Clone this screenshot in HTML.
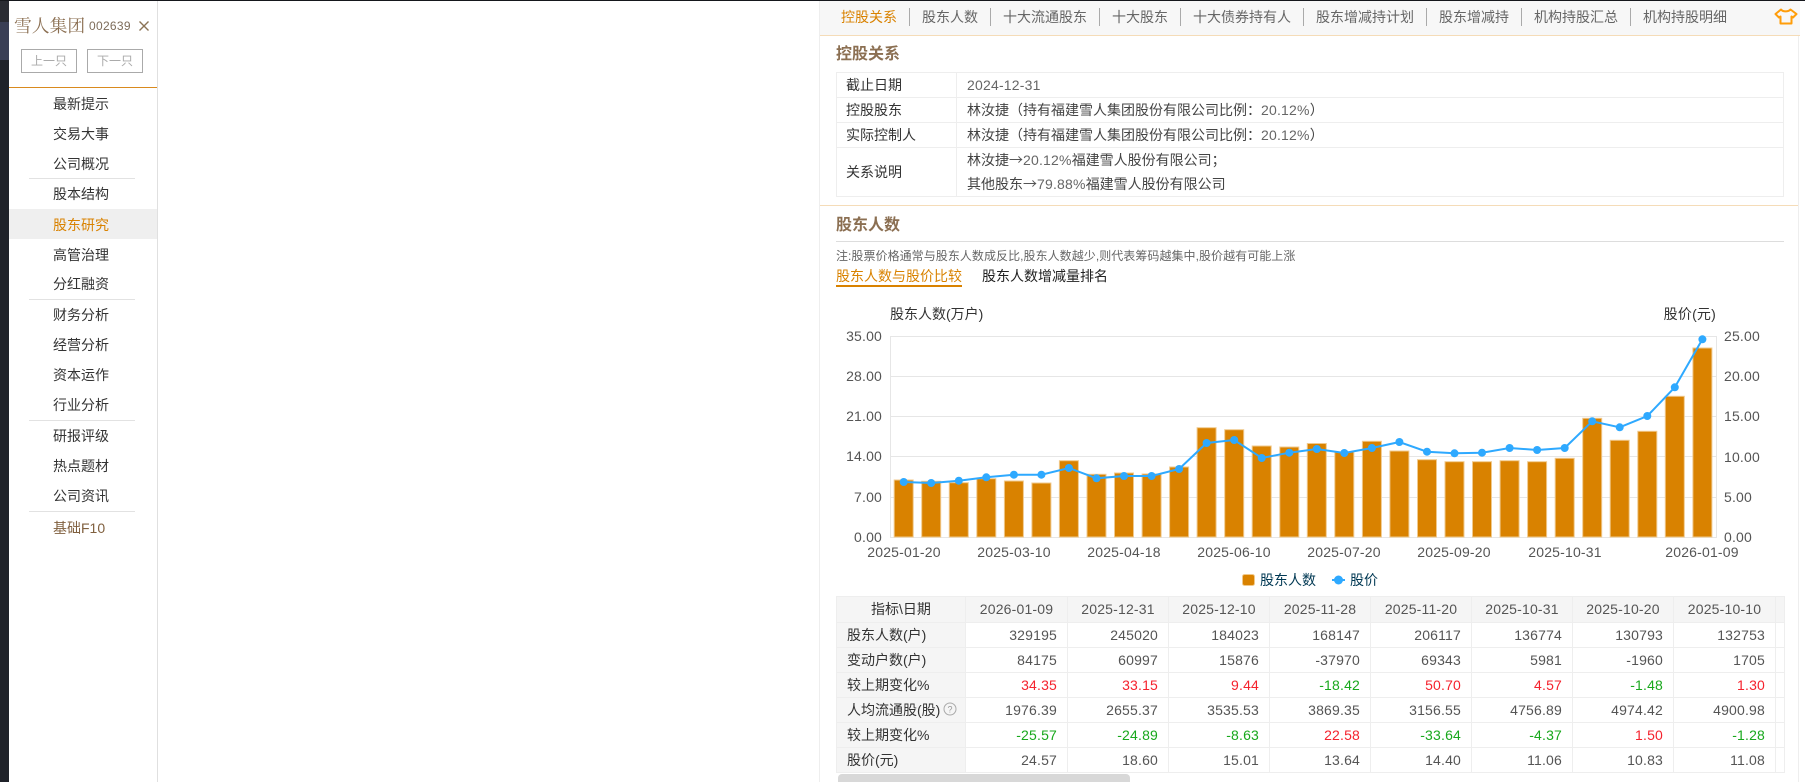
<!DOCTYPE html>
<html lang="zh"><head><meta charset="utf-8"><title>股东研究</title>
<style>
html,body{margin:0;padding:0;background:#fff;width:1805px;height:782px;overflow:hidden}
body{position:relative;font:14px/20px "Liberation Sans","WenQuanYi Zen Hei","Noto Sans CJK SC",sans-serif;color:#333}
.a{position:absolute;white-space:nowrap}
.m{position:absolute;left:53px;line-height:20px;color:#333}
.s{position:absolute;left:29px;width:106px;height:1px;background:#e2e2e2}
.t{position:absolute;top:7px;line-height:20px;color:#666}
.p{position:absolute;top:8px;width:1px;height:18px;background:#aaa}
.l{color:#333;position:absolute;left:846px;line-height:20px}
.v{color:#444;position:absolute;left:967px;line-height:20px;white-space:nowrap}
.n{letter-spacing:.2px;color:#666}
.ar{font-family:"Noto Sans CJK SC",sans-serif;color:#555}
.h{position:absolute;background:#eee}
.yl{position:absolute;line-height:20px;color:#555;white-space:nowrap;letter-spacing:.18px}
table{position:absolute;left:836px;top:596px;border-collapse:collapse;table-layout:fixed;width:948px}
td{border:1px solid #eee;height:24px;padding:0 10px 1px 0;text-align:right;color:#555;line-height:20px;white-space:nowrap;overflow:hidden;box-sizing:border-box;letter-spacing:.18px}
td:first-child{text-align:left;padding:0 0 1px 10px;background:#f5f5f5;color:#333;letter-spacing:0}
tr:first-child td{background:#f5f5f5;text-align:center;padding:0 0 1px}
.r{color:#f5222d}.g{color:#18a81c}
</style></head><body>
<div class="a" style="left:0;top:0;width:9px;height:782px;background:#1f2229"></div>
<div class="a" style="left:0;top:0;width:9px;height:22px;background:#2a2c33"></div>
<div class="a" style="left:0;top:22px;width:9px;height:38px;background:#3a3f55"></div>
<div class="a" style="left:0;top:0;width:1805px;height:1px;background:#15171c"></div>
<div class="a" style="left:157px;top:1px;width:1px;height:781px;background:#e0e0e0"></div>
<div class="a" style="left:14px;top:14px;font:17.8px/24px 'Noto Serif CJK SC',serif;color:#8b6f52">雪人集团</div>
<div class="a" style="left:89px;top:16px;font-size:12px;line-height:20px;letter-spacing:.3px;color:#7d6c5a">002639</div>
<svg class="a" style="left:139px;top:21px" width="10" height="10"><path d="M.5.5l9 9M9.5.5l-9 9" stroke="#8b7355" stroke-width="1.4"/></svg>
<div class="a" style="left:21px;top:49px;width:54px;height:22px;border:1px solid #aaa;text-align:center;font-size:12px;line-height:22px;color:#aaa">上一只</div>
<div class="a" style="left:87px;top:49px;width:54px;height:22px;border:1px solid #aaa;text-align:center;font-size:12px;line-height:22px;color:#aaa">下一只</div>
<div class="a" style="left:9px;top:87px;width:148px;height:1px;background:#d98a1e"></div>
<div class="a" style="left:9px;top:209px;width:148px;height:30px;background:#efefef"></div>
<div class="m" style="top:94px">最新提示</div>
<div class="m" style="top:124px">交易大事</div>
<div class="m" style="top:154px">公司概况</div>
<div class="s" style="top:178px"></div>
<div class="m" style="top:184px">股本结构</div>
<div class="m" style="top:215px;color:#d98200">股东研究</div>
<div class="m" style="top:245px">高管治理</div>
<div class="m" style="top:274px">分红融资</div>
<div class="s" style="top:299px"></div>
<div class="m" style="top:305px">财务分析</div>
<div class="m" style="top:335px">经营分析</div>
<div class="m" style="top:365px">资本运作</div>
<div class="m" style="top:395px">行业分析</div>
<div class="s" style="top:420px"></div>
<div class="m" style="top:426px">研报评级</div>
<div class="m" style="top:456px">热点题材</div>
<div class="m" style="top:486px">公司资讯</div>
<div class="s" style="top:511px"></div>
<div class="m" style="top:518px;color:#80603f">基础F10</div>

<div class="a" style="left:819px;top:1px;width:1px;height:781px;background:#eee"></div>
<div class="a" style="left:1798px;top:35px;width:1px;height:747px;background:#eee"></div>
<div class="a" style="left:820px;top:1px;width:980px;height:34px;background:#f7f7f7"></div>
<div class="a" style="left:820px;top:35px;width:980px;height:1px;background:#f5dcb8"></div>
<div class="t" style="left:841px;color:#d98200">控股关系</div><div class="p" style="left:909px"></div>
<div class="t" style="left:922px">股东人数</div><div class="p" style="left:990px"></div>
<div class="t" style="left:1003px">十大流通股东</div><div class="p" style="left:1099px"></div>
<div class="t" style="left:1112px">十大股东</div><div class="p" style="left:1180px"></div>
<div class="t" style="left:1193px">十大债券持有人</div><div class="p" style="left:1303px"></div>
<div class="t" style="left:1316px">股东增减持计划</div><div class="p" style="left:1426px"></div>
<div class="t" style="left:1439px">股东增减持</div><div class="p" style="left:1521px"></div>
<div class="t" style="left:1534px">机构持股汇总</div><div class="p" style="left:1630px"></div>
<div class="t" style="left:1643px">机构持股明细</div>
<svg class="a" style="left:1774px;top:7px" width="24" height="18"><path d="M7 2.5C9 5 14 5 16.5 2.5L22.5 7 19 10.5 17.5 9.5V16.5H6.5V9.5L5 10.5 1.5 7Z" fill="none" stroke="#ff9d0a" stroke-width="2" stroke-linejoin="round"/></svg>

<div class="a" style="left:836px;top:45px;font-size:16px;line-height:20px;font-weight:bold;color:#8b6f52">控股关系</div>
<div class="h" style="left:836px;top:72px;width:948px;height:1px"></div>
<div class="h" style="left:836px;top:97px;width:948px;height:1px"></div>
<div class="h" style="left:836px;top:122px;width:948px;height:1px"></div>
<div class="h" style="left:836px;top:147px;width:948px;height:1px"></div>
<div class="h" style="left:836px;top:196px;width:948px;height:1px"></div>
<div class="h" style="left:836px;top:72px;width:1px;height:125px"></div>
<div class="h" style="left:956px;top:72px;width:1px;height:125px"></div>
<div class="h" style="left:1783px;top:72px;width:1px;height:125px"></div>
<div class="l" style="top:75px">截止日期</div><div class="v" style="top:75px"><span class="n">2024-12-31</span></div>
<div class="l" style="top:100px">控股股东</div><div class="v" style="top:100px">林汝捷（持有福建雪人集团股份有限公司比例：<span class="n">20.12%</span>）</div>
<div class="l" style="top:125px">实际控制人</div><div class="v" style="top:125px">林汝捷（持有福建雪人集团股份有限公司比例：<span class="n">20.12%</span>）</div>
<div class="l" style="top:162px">关系说明</div>
<div class="v" style="top:150px">林汝捷<span class="ar">→</span><span class="n">20.12%</span>福建雪人股份有限公司；</div>
<div class="v" style="top:174px">其他股东<span class="ar">→</span><span class="n">79.88%</span>福建雪人股份有限公司</div>

<div class="a" style="left:820px;top:205px;width:978px;height:1px;background:#f5dcb8"></div>
<div class="a" style="left:836px;top:216px;font-size:16px;line-height:20px;font-weight:bold;color:#8b6f52">股东人数</div>
<div class="a" style="left:836px;top:241px;width:948px;height:1px;background:#ddd"></div>
<div class="a" style="left:836px;top:246px;font-size:12px;line-height:20px;letter-spacing:.05px;color:#666">注:股票价格通常与股东人数成反比,股东人数越少,则代表筹码越集中,股价越有可能上涨</div>
<div class="a" style="left:836px;top:266px;color:#d98200">股东人数与股价比较</div>
<div class="a" style="left:836px;top:285px;width:126px;height:2px;background:#d98200"></div>
<div class="a" style="left:982px;top:266px;color:#222">股东人数增减量排名</div>

<div class="a" style="left:890px;top:304px;color:#333">股东人数(万户)</div>
<div class="a" style="left:1660px;top:304px;width:56px;text-align:right;letter-spacing:.2px;color:#333">股价(元)</div>

<svg class="a" style="left:0;top:0" width="1805" height="782">
<g stroke="#e6e6e6" fill="none">
<path d="M890 336.5H1717M890 376.5H1717M890 416.5H1717M890 456.5H1717M890 497.5H1717M890 537.5H1717M890.5 336V538M1716.5 336V538"/>
</g>
<g fill="#d98200" stroke="#f0c98c" stroke-width="1">
<rect x="894.2" y="480" width="19" height="57"/><rect x="921.7" y="481.3" width="19" height="55.7"/><rect x="949.3" y="482.7" width="19" height="54.3"/><rect x="976.8" y="478.7" width="19" height="58.3"/><rect x="1004.4" y="481" width="19" height="56"/><rect x="1031.9" y="483" width="19" height="54"/><rect x="1059.4" y="460.7" width="19" height="76.3"/><rect x="1087" y="474.3" width="19" height="62.7"/><rect x="1114.5" y="473" width="19" height="64"/><rect x="1142.1" y="474" width="19" height="63"/>
<rect x="1169.6" y="467" width="19" height="70"/><rect x="1197.1" y="427.7" width="19" height="109.3"/><rect x="1224.7" y="429.7" width="19" height="107.3"/><rect x="1252.2" y="446" width="19" height="91"/><rect x="1279.8" y="447" width="19" height="90"/><rect x="1307.3" y="443.5" width="19" height="93.5"/><rect x="1334.8" y="452" width="19" height="85"/><rect x="1362.4" y="441.3" width="19" height="95.7"/><rect x="1389.9" y="451" width="19" height="86"/><rect x="1417.5" y="459.7" width="19" height="77.3"/>
<rect x="1445" y="461.7" width="19" height="75.3"/><rect x="1472.5" y="461.7" width="19" height="75.3"/><rect x="1500.1" y="460.7" width="19" height="76.3"/><rect x="1527.6" y="461.7" width="19" height="75.3"/><rect x="1555.2" y="458.3" width="19" height="78.7"/><rect x="1582.7" y="418.3" width="19" height="118.7"/><rect x="1610.2" y="440.3" width="19" height="96.7"/><rect x="1637.8" y="431.3" width="19" height="105.7"/><rect x="1665.3" y="396.3" width="19" height="140.7"/><rect x="1692.9" y="348" width="19" height="189"/>
</g>
<polyline fill="none" stroke="#2ea9ff" stroke-width="2" points="903.7,482 931.2,483 958.8,480.7 986.3,477.3 1013.9,474.7 1041.4,474.7 1068.9,468 1096.5,478.3 1124,476 1151.6,476 1179.1,469 1206.6,443 1234.2,440 1261.7,458 1289.3,452.7 1316.8,449 1344.3,453 1371.9,448 1399.4,442 1427,451.7 1454.5,453.3 1482,452.7 1509.6,448 1537.1,450 1564.7,448 1592.2,421.3 1619.7,427.3 1647.3,416 1674.8,387.3 1702.4,339.3"/>
<g fill="#2ea9ff">
<circle cx="903.7" cy="482" r="4"/><circle cx="931.2" cy="483" r="4"/><circle cx="958.8" cy="480.7" r="4"/><circle cx="986.3" cy="477.3" r="4"/><circle cx="1013.9" cy="474.7" r="4"/><circle cx="1041.4" cy="474.7" r="4"/><circle cx="1068.9" cy="468" r="4"/><circle cx="1096.5" cy="478.3" r="4"/><circle cx="1124" cy="476" r="4"/><circle cx="1151.6" cy="476" r="4"/>
<circle cx="1179.1" cy="469" r="4"/><circle cx="1206.6" cy="443" r="4"/><circle cx="1234.2" cy="440" r="4"/><circle cx="1261.7" cy="458" r="4"/><circle cx="1289.3" cy="452.7" r="4"/><circle cx="1316.8" cy="449" r="4"/><circle cx="1344.3" cy="453" r="4"/><circle cx="1371.9" cy="448" r="4"/><circle cx="1399.4" cy="442" r="4"/><circle cx="1427" cy="451.7" r="4"/>
<circle cx="1454.5" cy="453.3" r="4"/><circle cx="1482" cy="452.7" r="4"/><circle cx="1509.6" cy="448" r="4"/><circle cx="1537.1" cy="450" r="4"/><circle cx="1564.7" cy="448" r="4"/><circle cx="1592.2" cy="421.3" r="4"/><circle cx="1619.7" cy="427.3" r="4"/><circle cx="1647.3" cy="416" r="4"/><circle cx="1674.8" cy="387.3" r="4"/><circle cx="1702.4" cy="339.3" r="4"/>
</g>
<rect x="1242.5" y="574.5" width="12" height="11" rx="2" fill="#d98200" stroke="#f0c98c" stroke-width="1"/>
<path d="M1332 580H1345" stroke="#2ea9ff" stroke-width="2"/><circle cx="1338.5" cy="580" r="4.5" fill="#2ea9ff"/>
</svg>

<div class="yl" style="left:836px;width:46px;top:326px;text-align:right">35.00</div>
<div class="yl" style="left:836px;width:46px;top:366px;text-align:right">28.00</div>
<div class="yl" style="left:836px;width:46px;top:406px;text-align:right">21.00</div>
<div class="yl" style="left:836px;width:46px;top:446px;text-align:right">14.00</div>
<div class="yl" style="left:836px;width:46px;top:487px;text-align:right">7.00</div>
<div class="yl" style="left:836px;width:46px;top:527px;text-align:right">0.00</div>
<div class="yl" style="left:1724px;top:326px">25.00</div>
<div class="yl" style="left:1724px;top:366px">20.00</div>
<div class="yl" style="left:1724px;top:406px">15.00</div>
<div class="yl" style="left:1724px;top:447px">10.00</div>
<div class="yl" style="left:1724px;top:487px">5.00</div>
<div class="yl" style="left:1724px;top:527px">0.00</div>
<div class="yl" style="left:864px;width:80px;top:542px;text-align:center">2025-01-20</div>
<div class="yl" style="left:974px;width:80px;top:542px;text-align:center">2025-03-10</div>
<div class="yl" style="left:1084px;width:80px;top:542px;text-align:center">2025-04-18</div>
<div class="yl" style="left:1194px;width:80px;top:542px;text-align:center">2025-06-10</div>
<div class="yl" style="left:1304px;width:80px;top:542px;text-align:center">2025-07-20</div>
<div class="yl" style="left:1414px;width:80px;top:542px;text-align:center">2025-09-20</div>
<div class="yl" style="left:1525px;width:80px;top:542px;text-align:center">2025-10-31</div>
<div class="yl" style="left:1662px;width:80px;top:542px;text-align:center">2026-01-09</div>
<div class="a" style="left:1260px;top:570px;color:#003853">股东人数</div>
<div class="a" style="left:1350px;top:570px;color:#003853">股价</div>

<table>
<colgroup><col style="width:129px"><col style="width:102px"><col style="width:101px"><col style="width:101px"><col style="width:101px"><col style="width:101px"><col style="width:101px"><col style="width:101px"><col style="width:102px"><col style="width:9px"></colgroup>
<tr style="height:26px"><td>指标\日期</td><td>2026-01-09</td><td>2025-12-31</td><td>2025-12-10</td><td>2025-11-28</td><td>2025-11-20</td><td>2025-10-31</td><td>2025-10-20</td><td>2025-10-10</td><td></td></tr>
<tr style="height:25px"><td>股东人数(户)</td><td>329195</td><td>245020</td><td>184023</td><td>168147</td><td>206117</td><td>136774</td><td>130793</td><td>132753</td><td></td></tr>
<tr style="height:25px"><td>变动户数(户)</td><td>84175</td><td>60997</td><td>15876</td><td>-37970</td><td>69343</td><td>5981</td><td>-1960</td><td>1705</td><td></td></tr>
<tr style="height:25px"><td>较上期变化%</td><td class="r">34.35</td><td class="r">33.15</td><td class="r">9.44</td><td class="g">-18.42</td><td class="r">50.70</td><td class="r">4.57</td><td class="g">-1.48</td><td class="r">1.30</td><td></td></tr>
<tr style="height:25px"><td>人均流通股(股)</td><td>1976.39</td><td>2655.37</td><td>3535.53</td><td>3869.35</td><td>3156.55</td><td>4756.89</td><td>4974.42</td><td>4900.98</td><td></td></tr>
<tr style="height:25px"><td>较上期变化%</td><td class="g">-25.57</td><td class="g">-24.89</td><td class="g">-8.63</td><td class="r">22.58</td><td class="g">-33.64</td><td class="g">-4.37</td><td class="r">1.50</td><td class="g">-1.28</td><td></td></tr>
<tr style="height:25px"><td>股价(元)</td><td>24.57</td><td>18.60</td><td>15.01</td><td>13.64</td><td>14.40</td><td>11.06</td><td>10.83</td><td>11.08</td><td></td></tr>
</table>
<svg class="a" style="left:943px;top:702px" width="14" height="14"><circle cx="7" cy="7" r="6" fill="none" stroke="#aaa"/><text x="7" y="10.5" text-anchor="middle" font-size="9" fill="#999" font-family="Liberation Sans">?</text></svg>
<div class="a" style="left:838px;top:774px;width:292px;height:8px;background:#d8d8d8;border-radius:4px 4px 0 0"></div>
</body></html>
